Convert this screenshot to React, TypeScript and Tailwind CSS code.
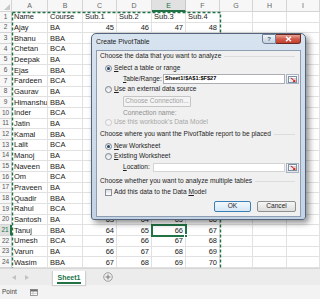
import React from 'react';

const names = ['Name', 'Ajay', 'Bhanu', 'Chetan', 'Deepak', 'Ejas', 'Fardeen', 'Gaurav', 'Himanshu', 'Inder', 'Jatin', 'Kamal', 'Lalit', 'Manoj', 'Naveen', 'Om', 'Praveen', 'Quadir', 'Rahul', 'Santosh', 'Tanuj', 'Umesh', 'Varun', 'Wasim'];
const courses = ['BA', 'BBA', 'BCA'];

// column letters with their widths
const cols = [
  { l: 'A', w: 'w-[36px]' },
  { l: 'B', w: 'w-[35px]' },
  { l: 'C', w: 'w-[34px]' },
  { l: 'D', w: 'w-[35px]' },
  { l: 'E', w: 'w-[34px]' },
  { l: 'F', w: 'w-[34px]' },
  { l: 'G', w: 'w-[33px]' },
  { l: 'H', w: 'w-[34px]' },
  { l: 'I', w: 'flex-1' },
];

function Radio({ on, off }: { on?: boolean; off?: boolean }) {
  return (
    <span
      className={`w-[7px] h-[7px] rounded-full border flex items-center justify-center shrink-0 ${
        off ? 'border-[#c9c9c9] bg-[#f4f4f4]' : 'border-[#7b8594] bg-linear-to-b from-[#dcdcdc] to-white'
      }`}
    >
      {on && <span className="w-[3px] h-[3px] rounded-full bg-[#24446e]" />}
    </span>
  );
}

function RangeBtn() {
  return (
    <span className="w-[13px] h-[10px] ml-[1px] border border-[#a9b4c2] bg-linear-to-b from-[#fbfbfb] to-[#dde4ec] flex items-center justify-center shrink-0">
      <svg width="9" height="7" viewBox="0 0 9 7">
        <rect x="0.5" y="0.5" width="8" height="6" fill="#fff" stroke="#7d8da2" />
        <path d="M0.5 2.5H8.5M3 0.5V6.5" stroke="#a5b1c0" strokeWidth="0.6" />
        <path d="M3.2 2.2L6.8 5.4M6.9 3.4V5.5H4.8" stroke="#d2302a" strokeWidth="1.1" fill="none" />
      </svg>
    </span>
  );
}

function Heading({ children }: { children: React.ReactNode }) {
  return (
    <div className="h-[8px] flex items-center gap-[3px] pr-[4px]">
      <span className="whitespace-nowrap">{children}</span>
      <span className="flex-1 border-t border-[#dcdcdc]" />
    </div>
  );
}

export default function App() {
  return (
    <div className="relative w-[320px] h-[299px] overflow-hidden bg-white font-['Liberation_Sans',Arial,sans-serif] text-[#222]">
      {/* grid */}
      <div className="h-[268px] flex flex-col">
        <div className="h-[12px] flex shrink-0 bg-[#f7f7f7] text-[7px] leading-none text-[#666]">
          <div className="w-[12px] border-r border-b border-[#d4d4d4] relative">
            <svg className="absolute right-[1px] bottom-[1px]" width="6" height="6" viewBox="0 0 6 6">
              <path d="M6 0V6H0Z" fill="#c8c8c8" />
            </svg>
          </div>
          {cols.map((c) => (
            <div
              key={c.l}
              className={`${c.w} flex items-center justify-center border-r ${
                c.l === 'E' ? 'bg-[#e1e1e1] border-b-2 border-b-[#217346] text-[#217346] border-r-[#c8c8c8]' : 'border-b border-[#d4d4d4]'
              }`}
            >
              {c.l}
            </div>
          ))}
        </div>
        <div className="flex-1 flex flex-col">
          {names.map((nm, i) => {
            const n = i + 1;
            const vals =
              n === 1
                ? ['Name', 'Course', 'Sub.1', 'Sub.2', 'Sub.3', 'Sub.4']
                : [nm, courses[(n - 2) % 3], String(43 + n), String(44 + n), String(45 + n), String(46 + n)];
            // rows 3-19 of C:F sit under the dialog
            const hidden = n >= 3 && n <= 19;
            return (
              <div key={n} className="flex-1 min-h-0 flex text-[7.5px] leading-none">
                <div
                  className={`w-[12px] flex items-center justify-center text-[6.5px] border-b border-[#d4d4d4] ${
                    n === 21 ? 'bg-[#e1e1e1] border-r-2 border-r-[#217346] text-[#217346]' : 'bg-[#f7f7f7] border-r text-[#555]'
                  }`}
                >
                  {n}
                </div>
                {cols.map((c, j) => {
                  const v = hidden && j >= 2 ? '' : vals[j] ?? '';
                  const num = n > 1 && j >= 2 && j <= 5;
                  return (
                    <div
                      key={c.l}
                      className={`${c.w} overflow-hidden whitespace-nowrap border-r border-b border-[#e1e1e1] flex items-end pb-[1px] ${
                        num ? 'justify-end pr-[2px]' : 'pl-[2px]'
                      }`}
                    >
                      {v}
                    </div>
                  );
                })}
              </div>
            );
          })}
        </div>
      </div>

      {/* sheet tabs */}
      <div className="h-[17px] flex items-start bg-[#ececec] border-t border-[#d6d6d6]">
        <div className="w-[52px] h-full flex items-center gap-[9px] pl-[12px]">
          <svg width="4" height="5" viewBox="0 0 4 5">
            <path d="M4 0V5L0 2.5Z" fill="#c2c2c2" />
          </svg>
          <svg width="4" height="5" viewBox="0 0 4 5">
            <path d="M0 0V5L4 2.5Z" fill="#c2c2c2" />
          </svg>
        </div>
        <div className="w-[34px] h-[14px] mt-[2px] bg-white border-x border-[#cfcfcf] shadow-[0_1px_1px_rgba(0,0,0,0.15)] flex items-center justify-center">
          <span className="text-[7px] font-bold text-[#217346] border-b-2 border-[#217346] leading-[9px] px-[1px]">Sheet1</span>
        </div>
        <div className="flex-1 h-full flex items-center pl-[17px]">
          <svg width="10" height="10" viewBox="0 0 10 10">
            <circle cx="5" cy="5" r="4.3" fill="none" stroke="#8a8a8a" strokeWidth="0.8" />
            <path d="M5 2.6V7.4M2.6 5H7.4" stroke="#6f6f6f" strokeWidth="0.9" />
          </svg>
        </div>
      </div>

      {/* status bar */}
      <div className="h-[14px] flex items-center gap-[13px] pl-[2px] bg-[#f3f3f3] text-[6.5px] leading-none text-[#444]">
        <span>Point</span>
        <svg width="8" height="7" viewBox="0 0 8 7">
          <rect x="0.5" y="0.5" width="7" height="6" fill="#fff" stroke="#777" strokeWidth="0.7" />
          <path d="M0.5 2.3H7.5M0.5 4.3H7.5M3 0.5V6.5" stroke="#999" strokeWidth="0.5" />
          <rect x="0.5" y="0.5" width="7" height="1.8" fill="#6d6d6d" />
        </svg>
      </div>

      {/* copy marquee around A1:F27 */}
      <svg className="absolute left-0 top-0 pointer-events-none" width="320" height="268">
        <path d="M12.5 12.5H220.5V268M12.5 12.5V268" fill="none" stroke="#217346" strokeWidth="1.4" strokeDasharray="3 2" />
      </svg>

      {/* active cell E21 */}
      <div className="absolute left-[151px] top-[224px] w-[36px] h-[13px] border-2 border-[#217346]">
        <span className="absolute -right-[3px] -bottom-[3px] w-[4px] h-[4px] bg-[#217346] border border-white" />
      </div>

      {/* Create PivotTable dialog */}
      <div className="absolute left-[91px] top-[33px] w-[215px] h-[187px] rounded-t-[5px] rounded-b-[3px] border border-[#53647b] bg-linear-to-b from-[#d8e3f0] to-[#c3d3e5] shadow-[3px_3px_6px_rgba(0,0,0,0.45)] flex flex-col font-['Liberation_Sans',Arial,sans-serif] text-[6.6px] leading-none text-[#1e1e1e]">
        <div className="h-[16px] flex items-start shrink-0">
          <span className="pl-[4px] mt-[5px] text-[6.8px] text-[#222]">Create PivotTable</span>
          <div className="ml-auto mr-[4px] flex">
            <div className="w-[14px] h-[10px] rounded-bl-[3px] border border-[#6f8096] bg-linear-to-b from-[#f1f5fa] to-[#c3d1e1] flex items-center justify-center text-[6px] font-bold text-[#4b5563]">
              ?
            </div>
            <div className="w-[25px] h-[10px] rounded-br-[3px] border border-l-0 border-[#6a2a22] bg-linear-to-b from-[#e6a396] via-[#d0594a] to-[#c33f2c] flex items-center justify-center">
              <svg width="7" height="6" viewBox="0 0 7 6">
                <path d="M1 0.8L6 5.2M6 0.8L1 5.2" stroke="#fff" strokeWidth="1.5" />
              </svg>
            </div>
          </div>
        </div>
        <div className="flex-1 mx-[4px] mb-[2px] bg-[#f0f0f0] border border-[#8d9db2] pl-[3px] pr-[1px] flex flex-col">
          <div className="mt-[1px]">
            <Heading>Choose the data that you want to analyze</Heading>
          </div>
          <div className="h-[8px] mt-[4px] ml-[5px] flex items-center gap-[2px]">
            <Radio on />
            <span>
              <u>S</u>elect a table or range
            </span>
          </div>
          <div className="h-[10px] mt-[2px] ml-[23px] flex items-center">
            <span className="w-[40px]">
              <u>T</u>able/Range:
            </span>
            <div className="flex-1 h-full bg-white border border-[#abadb3] flex items-center pl-[1px] text-[5.6px] font-bold text-black">
              Sheet1!$A$1:$F$27
            </div>
            <RangeBtn />
          </div>
          <div className="h-[8px] mt-[1px] ml-[5px] flex items-center gap-[2px]">
            <Radio />
            <span>
              <u>U</u>se an external data source
            </span>
          </div>
          <div className="h-[11px] mt-[3px] ml-[23px] w-[68px] border border-[#c5c5c5] bg-[#f4f4f4] rounded-[1px] flex items-center justify-center text-[#a3a3a3]">
            Choose Connection...
          </div>
          <div className="h-[8px] mt-[2px] ml-[23px] flex items-center text-[#8f8f8f]">Connection name:</div>
          <div className="h-[8px] mt-[1px] ml-[5px] flex items-center gap-[2px] text-[#a8a8a8]">
            <Radio off />
            <span>Use this workbook's Data Model</span>
          </div>
          <div className="mt-[4px]">
            <Heading>Choose where you want the PivotTable report to be placed</Heading>
          </div>
          <div className="h-[8px] mt-[4px] ml-[5px] flex items-center gap-[2px]">
            <Radio on />
            <span>
              <u>N</u>ew Worksheet
            </span>
          </div>
          <div className="h-[8px] mt-[2px] ml-[5px] flex items-center gap-[2px]">
            <Radio />
            <span>
              <u>E</u>xisting Worksheet
            </span>
          </div>
          <div className="h-[9px] mt-[3px] ml-[23px] flex items-center">
            <span className="w-[30px]">
              <u>L</u>ocation:
            </span>
            <div className="flex-1 h-full bg-white border border-[#d4d4d4]" />
            <RangeBtn />
          </div>
          <div className="mt-[5px]">
            <Heading>Choose whether you want to analyze multiple tables</Heading>
          </div>
          <div className="h-[8px] mt-[3px] ml-[5px] flex items-center gap-[2px]">
            <span className="w-[7px] h-[7px] border border-[#8a8f98] bg-linear-to-b from-[#dedede] to-white shrink-0" />
            <span>
              Add this data to the Data <u>M</u>odel
            </span>
          </div>
          <div className="h-[11px] mt-[5px] flex justify-end gap-[6px] pr-[3px]">
            <div className="w-[37px] h-full border border-[#3c7fb1] rounded-[2px] bg-linear-to-b from-[#f2f8fd] to-[#d5e7f6] flex items-center justify-center">
              OK
            </div>
            <div className="w-[39px] h-full border border-[#8e8f8f] rounded-[2px] bg-linear-to-b from-[#f6f6f6] to-[#dddddd] flex items-center justify-center">
              Cancel
            </div>
          </div>
        </div>
      </div>
    </div>
  );
}
